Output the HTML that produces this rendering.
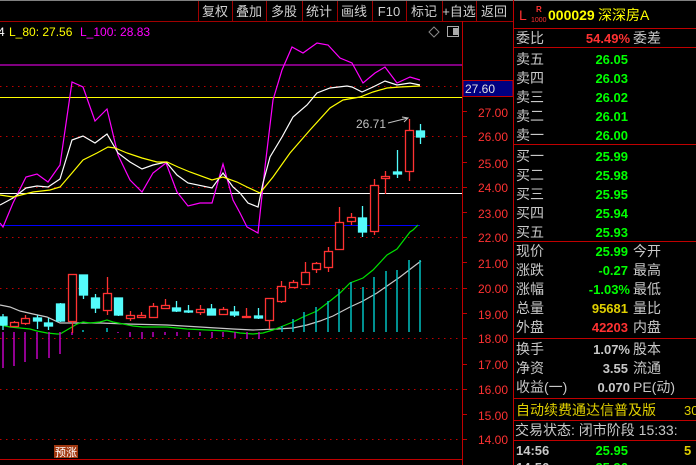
<!DOCTYPE html>
<html><head><meta charset="utf-8"><style>
html,body{margin:0;padding:0;background:#000;}
body{width:696px;height:465px;overflow:hidden;position:relative;font-family:"Liberation Sans","Noto Sans CJK SC",sans-serif;}
svg{position:absolute;left:0;top:0;}
</style></head><body>
<svg width="696" height="465" viewBox="0 0 696 465" font-family="Liberation Sans, Noto Sans CJK SC, sans-serif">
<rect width="696" height="465" fill="#000"/>
<line x1="0" y1="0.5" x2="696" y2="0.5" stroke="#808080"/>
<g stroke="#a00000" stroke-width="1">
<line x1="0" y1="21.5" x2="513" y2="21.5"/>
<line x1="198.5" y1="1" x2="198.5" y2="21"/><line x1="232.5" y1="1" x2="232.5" y2="21"/><line x1="266.5" y1="1" x2="266.5" y2="21"/><line x1="302.5" y1="1" x2="302.5" y2="21"/><line x1="337.5" y1="1" x2="337.5" y2="21"/><line x1="372.5" y1="1" x2="372.5" y2="21"/><line x1="406.5" y1="1" x2="406.5" y2="21"/><line x1="442.5" y1="1" x2="442.5" y2="21"/><line x1="476.5" y1="1" x2="476.5" y2="21"/>
</g>
<g fill="#d0d0d0" font-size="13" text-anchor="middle">
<text x="215" y="16">复权</text><text x="249" y="16">叠加</text><text x="284" y="16">多股</text><text x="319" y="16">统计</text><text x="354" y="16">画线</text><text x="389" y="16">F10</text><text x="424" y="16">标记</text><text x="459" y="16">+自选</text><text x="494" y="16">返回</text>
</g>
<text x="-2" y="36" font-size="12" fill="#fff">4</text>
<text x="9" y="36" font-size="12" fill="#ffff00">L_80: 27.56</text>
<text x="80" y="36" font-size="12" fill="#ff00ff">L_100: 28.83</text>
<path d="M434 27 l5 5 l-5 5 l-5 -5z" fill="none" stroke="#888"/>
<rect x="447.5" y="26.5" width="11" height="10" fill="none" stroke="#aaa"/><rect x="453" y="28" width="5" height="7" fill="#aaa"/>
<line x1="462.5" y1="21" x2="462.5" y2="465" stroke="#c00000"/>
<line x1="0" y1="459.5" x2="462" y2="459.5" stroke="#c00000"/>
<g stroke="#c00000" stroke-dasharray="1.5,4.5">
<line x1="0" y1="86.5" x2="462" y2="86.5"/><line x1="0" y1="136.5" x2="462" y2="136.5"/><line x1="0" y1="187.5" x2="462" y2="187.5"/><line x1="0" y1="237.5" x2="462" y2="237.5"/><line x1="0" y1="288.5" x2="462" y2="288.5"/><line x1="0" y1="338.5" x2="462" y2="338.5"/><line x1="0" y1="389.5" x2="462" y2="389.5"/><line x1="0" y1="439.5" x2="462" y2="439.5"/>
</g>
<g stroke="#c00000">
<line x1="463" y1="111.5" x2="467" y2="111.5"/><line x1="463" y1="136.5" x2="467" y2="136.5"/><line x1="463" y1="162.5" x2="467" y2="162.5"/><line x1="463" y1="187.5" x2="467" y2="187.5"/><line x1="463" y1="212.5" x2="467" y2="212.5"/><line x1="463" y1="237.5" x2="467" y2="237.5"/><line x1="463" y1="262.5" x2="467" y2="262.5"/><line x1="463" y1="288.5" x2="467" y2="288.5"/><line x1="463" y1="313.5" x2="467" y2="313.5"/><line x1="463" y1="338.5" x2="467" y2="338.5"/><line x1="463" y1="364.5" x2="467" y2="364.5"/><line x1="463" y1="389.5" x2="467" y2="389.5"/><line x1="463" y1="414.5" x2="467" y2="414.5"/><line x1="463" y1="439.5" x2="467" y2="439.5"/>
</g>
<g fill="#ff3232" font-size="12" text-anchor="end">
<text x="508" y="117">27.00</text><text x="508" y="141">26.00</text><text x="508" y="168">25.00</text><text x="508" y="192">24.00</text><text x="508" y="218">23.00</text><text x="508" y="242">22.00</text><text x="508" y="268">21.00</text><text x="508" y="293">20.00</text><text x="508" y="319">19.00</text><text x="508" y="343">18.00</text><text x="508" y="369">17.00</text><text x="508" y="394">16.00</text><text x="508" y="420">15.00</text><text x="508" y="444">14.00</text>
</g>
<rect x="463" y="80.5" width="50" height="16" fill="#000080" stroke="#c00000"/>
<text x="465" y="93" font-size="12" fill="#e0e0e0">27.60</text>
<line x1="0" y1="65" x2="462" y2="65" stroke="#ff00ff"/>
<line x1="0" y1="97.5" x2="462" y2="97.5" stroke="#ffff00"/>
<line x1="0" y1="193.5" x2="462" y2="193.5" stroke="#fff"/>
<line x1="0" y1="225.5" x2="420" y2="225.5" stroke="#0000ff"/>
<polyline fill="none" stroke="#ff00ff" stroke-width="1.2" points="0,223 3,227 13,203 26,177 37,174 48,182 60,165 72,82 83,87 95,121 107,109 118,155 130,180 142,192 153,173 166,163 177,192 188,206 200,203 212,203 223,164 233,200 240,213 247,227 258,233 265,167 273,100 282,70 292,47 303,53 317,43 328,45 340,58 352,63 363,83 375,73 385,67 397,83 410,77 420,80"/>
<polyline fill="none" stroke="#fff" stroke-width="1.2" points="0,205 13,198 26,188 37,186 48,187 60,179 72,140 83,136 95,143 107,134 118,153 130,162 142,169 153,165 166,162 177,175 188,183 212,188 223,173 233,187 240,193 248,203 258,207 263,183 270,157 282,137 293,117 307,105 317,93 330,88 347,86 352,87 362,92 373,87 385,81 397,85 410,83 420,85"/>
<polyline fill="none" stroke="#ffff00" stroke-width="1.2" points="0,195 13,197 33,192 50,190 60,187 72,173 83,160 97,153 108,147 115,148 127,153 142,158 157,162 167,162 178,167 190,172 212,180 223,177 237,182 247,187 260,193 273,177 290,153 310,130 330,108 343,100 360,97 373,92 387,88 400,87 420,86"/>
<text x="356" y="128" font-size="12" fill="#c0c0c0">26.71</text>
<path d="M388 123 L408 118 M402 117 L408 118 L404 122" fill="none" stroke="#c0c0c0"/>
<polyline fill="none" stroke="#c8c8c8" stroke-width="1.2" points="0,305 10,307 20,311 33,314 47,317 60,323 100,323 127,324 167,325 200,327 233,329 253,330 277,329 293,328 307,325 320,321 333,316 350,307 363,301 377,293 387,286 400,277 413,267 421,261"/>
<polyline fill="none" stroke="#00e000" stroke-width="1.2" points="0,325 10,327 20,328 30,329 37,331 47,333 57,334 60,334 72,327 77,324 83,322 90,323 100,322 107,320 113,322 123,324 133,326 143,327 167,327 187,329 207,330 227,331 240,333 253,334 263,333 273,330 283,326 293,322 303,317 317,311 330,301 340,293 350,283 363,278 373,270 387,255 397,249 410,232 413,230 418,225"/>
<g stroke="#c000c0" stroke-width="1.5">
<line x1="3" y1="332" x2="3" y2="368"/><line x1="14" y1="332" x2="14" y2="366"/><line x1="25" y1="332" x2="25" y2="362"/><line x1="37" y1="332" x2="37" y2="359"/><line x1="49" y1="332" x2="49" y2="358"/><line x1="60" y1="332" x2="60" y2="354"/><line x1="72" y1="332" x2="72" y2="335"/><line x1="118" y1="332" x2="118" y2="333"/><line x1="130" y1="332" x2="130" y2="337"/><line x1="142" y1="332" x2="142" y2="339"/><line x1="153" y1="332" x2="153" y2="337"/><line x1="165" y1="332" x2="165" y2="335"/><line x1="177" y1="332" x2="177" y2="336"/><line x1="189" y1="332" x2="189" y2="337"/><line x1="200" y1="332" x2="200" y2="336"/><line x1="212" y1="332" x2="212" y2="338"/><line x1="223" y1="332" x2="223" y2="337"/><line x1="235" y1="332" x2="235" y2="338"/><line x1="247" y1="332" x2="247" y2="339"/><line x1="259" y1="332" x2="259" y2="339"/>
</g>
<g stroke="#00c0c0" stroke-width="1.5">
<line x1="83" y1="330" x2="83" y2="332"/><line x1="107" y1="328" x2="107" y2="332"/><line x1="282" y1="326" x2="282" y2="332"/><line x1="293" y1="319" x2="293" y2="332"/><line x1="304" y1="312" x2="304" y2="332"/><line x1="316" y1="307" x2="316" y2="332"/><line x1="328" y1="301" x2="328" y2="332"/><line x1="339" y1="289" x2="339" y2="332"/><line x1="351" y1="282" x2="351" y2="332"/><line x1="363" y1="287" x2="363" y2="332"/><line x1="374" y1="277" x2="374" y2="332"/><line x1="386" y1="271" x2="386" y2="332"/><line x1="397" y1="270" x2="397" y2="332"/><line x1="409" y1="260" x2="409" y2="332"/><line x1="420" y1="260" x2="420" y2="332"/>
</g>
<g stroke="#ff3232" fill="#000" stroke-width="1.3">
<line x1="14.5" y1="321" x2="14.5" y2="327"/><rect x="10.5" y="322.5" width="8" height="4"/>
<line x1="25.5" y1="315" x2="25.5" y2="325"/><rect x="21.5" y="318.5" width="8" height="5"/>
<line x1="72.5" y1="274" x2="72.5" y2="333"/><rect x="68.5" y="274.5" width="8" height="47"/>
<line x1="107.5" y1="277" x2="107.5" y2="315"/><rect x="103.5" y="293.5" width="8" height="17"/>
<line x1="130.5" y1="311" x2="130.5" y2="321"/><rect x="126.5" y="315.5" width="8" height="3"/>
<line x1="141.5" y1="312" x2="141.5" y2="317"/><rect x="137.5" y="315.5" width="8" height="2"/>
<line x1="153.5" y1="303" x2="153.5" y2="317"/><rect x="149.5" y="306.5" width="8" height="11"/>
<line x1="165.5" y1="299" x2="165.5" y2="309"/><rect x="161.5" y="305.5" width="8" height="3"/>
<line x1="200.5" y1="305" x2="200.5" y2="315"/><rect x="196.5" y="309.5" width="8" height="3"/>
<line x1="223.5" y1="307" x2="223.5" y2="315"/><rect x="219.5" y="309.5" width="8" height="5"/>
<line x1="246.5" y1="308" x2="246.5" y2="318"/><rect x="242.5" y="316.5" width="8" height="1"/>
<line x1="269.5" y1="298" x2="269.5" y2="329"/><rect x="265.5" y="298.5" width="8" height="22"/>
<line x1="281.5" y1="281" x2="281.5" y2="303"/><rect x="277.5" y="286.5" width="8" height="15"/>
<line x1="293.5" y1="280" x2="293.5" y2="288"/><rect x="289.5" y="282.5" width="8" height="5"/>
<line x1="305.5" y1="262" x2="305.5" y2="285"/><rect x="301.5" y="272.5" width="8" height="12"/>
<line x1="316.5" y1="262" x2="316.5" y2="273"/><rect x="312.5" y="263.5" width="8" height="6"/>
<line x1="328.5" y1="247" x2="328.5" y2="272"/><rect x="324.5" y="251.5" width="8" height="16"/>
<line x1="339.5" y1="207" x2="339.5" y2="249"/><rect x="335.5" y="222.5" width="8" height="27"/>
<line x1="351.5" y1="213" x2="351.5" y2="225"/><rect x="347.5" y="217.5" width="8" height="4"/>
<line x1="374.5" y1="179" x2="374.5" y2="235"/><rect x="370.5" y="185.5" width="8" height="46"/>
<line x1="385.5" y1="171" x2="385.5" y2="194"/><rect x="381.5" y="176.5" width="8" height="2"/>
<line x1="409.5" y1="119" x2="409.5" y2="181"/><rect x="405.5" y="130.5" width="8" height="41"/>
</g>
<g stroke="#54fcfc" fill="#54fcfc" stroke-width="1.3">
<line x1="3" y1="314" x2="3" y2="330"/><rect x="-1" y="317" width="8" height="8"/>
<line x1="37.5" y1="315" x2="37.5" y2="329"/><rect x="33.5" y="318" width="8" height="3"/>
<line x1="48.5" y1="318" x2="48.5" y2="330"/><rect x="44.5" y="323" width="8" height="3"/>
<line x1="60.5" y1="303" x2="60.5" y2="322"/><rect x="56.5" y="304" width="8" height="17"/>
<line x1="83.5" y1="275" x2="83.5" y2="299"/><rect x="79.5" y="275" width="8" height="20"/>
<line x1="95.5" y1="294" x2="95.5" y2="313"/><rect x="91.5" y="298" width="8" height="10"/>
<line x1="118.5" y1="298" x2="118.5" y2="316"/><rect x="114.5" y="298" width="8" height="17"/>
<line x1="176.5" y1="301" x2="176.5" y2="312"/><rect x="172.5" y="308" width="8" height="3"/>
<line x1="188.5" y1="305" x2="188.5" y2="313"/><rect x="184.5" y="311" width="8" height="1"/>
<line x1="211.5" y1="304" x2="211.5" y2="315"/><rect x="207.5" y="309" width="8" height="6"/>
<line x1="234.5" y1="306" x2="234.5" y2="317"/><rect x="230.5" y="312" width="8" height="3"/>
<line x1="258.5" y1="308" x2="258.5" y2="319"/><rect x="254.5" y="316" width="8" height="2"/>
<line x1="362.5" y1="206" x2="362.5" y2="237"/><rect x="358.5" y="218" width="8" height="14"/>
<line x1="397.5" y1="150" x2="397.5" y2="178"/><rect x="393.5" y="172" width="8" height="2"/>
<line x1="420.5" y1="124" x2="420.5" y2="144"/><rect x="416.5" y="131" width="8" height="6"/>
</g>
<rect x="54" y="445" width="24" height="13" fill="#a03810"/>
<text x="55" y="456" font-size="11" fill="#fff">预涨</text>
<line x1="513.5" y1="0" x2="513.5" y2="465" stroke="#c00000"/>
<g stroke="#c00000">
<line x1="513" y1="28.5" x2="696" y2="28.5"/><line x1="513" y1="47.5" x2="696" y2="47.5"/><line x1="513" y1="144.5" x2="696" y2="144.5"/><line x1="513" y1="241.5" x2="696" y2="241.5"/><line x1="513" y1="338.5" x2="696" y2="338.5"/><line x1="513" y1="398.5" x2="696" y2="398.5"/><line x1="513" y1="420.5" x2="696" y2="420.5"/><line x1="513" y1="440.5" x2="696" y2="440.5"/>
</g>
<text x="519" y="20" font-size="14" fill="#ff3232">L</text>
<text x="536" y="12" font-size="8" fill="#ff3232" font-weight="bold">R</text>
<text x="531" y="22" font-size="7" fill="#ff3232">1000</text>
<text x="548" y="20" font-size="14" fill="#ffff00" font-weight="bold">000029</text>
<text x="598" y="20" font-size="14" fill="#ffff00">深深房A</text>
<g font-size="14" fill="#c8c8c8">
<text x="516" y="43">委比</text>
<text x="516" y="64">卖五</text><text x="516" y="83">卖四</text><text x="516" y="102">卖三</text><text x="516" y="121">卖二</text><text x="516" y="140">卖一</text>
<text x="516" y="161">买一</text><text x="516" y="180">买二</text><text x="516" y="199">买三</text><text x="516" y="218">买四</text><text x="516" y="237">买五</text>
<text x="516" y="256">现价</text><text x="516" y="275">涨跌</text><text x="516" y="294">涨幅</text><text x="516" y="313">总量</text><text x="516" y="332">外盘</text>
<text x="516" y="354">换手</text><text x="516" y="373">净资</text><text x="516" y="392">收益(一)</text>
<text x="633" y="43">委差</text>
<text x="633" y="256">今开</text><text x="633" y="275">最高</text><text x="633" y="294">最低</text><text x="633" y="313">量比</text><text x="633" y="332">内盘</text>
<text x="633" y="354">股本</text><text x="633" y="373">流通</text><text x="633" y="392">PE(动)</text>
<text x="515" y="435">交易状态: 闭市阶段 15:33:</text>
</g>
<g font-size="13" font-weight="bold" text-anchor="end">
<text x="630" y="43" fill="#ff3232">54.49%</text>
<text x="628" y="64" fill="#00ff00">26.05</text><text x="628" y="83" fill="#00ff00">26.03</text><text x="628" y="102" fill="#00ff00">26.02</text><text x="628" y="121" fill="#00ff00">26.01</text><text x="628" y="140" fill="#00ff00">26.00</text>
<text x="628" y="161" fill="#00ff00">25.99</text><text x="628" y="180" fill="#00ff00">25.98</text><text x="628" y="199" fill="#00ff00">25.95</text><text x="628" y="218" fill="#00ff00">25.94</text><text x="628" y="237" fill="#00ff00">25.93</text>
<text x="628" y="256" fill="#00ff00">25.99</text><text x="628" y="275" fill="#00ff00">-0.27</text><text x="630" y="294" fill="#00ff00">-1.03%</text><text x="628" y="313" fill="#e0d000">95681</text><text x="628" y="332" fill="#ff3232">42203</text>
<text x="630" y="354" fill="#c8c8c8">1.07%</text><text x="628" y="373" fill="#c8c8c8">3.55</text><text x="630" y="392" fill="#c8c8c8">0.070</text>
</g>
<text x="516" y="415" font-size="14" fill="#e0d000">自动续费通达信普及版</text>
<text x="684" y="415" font-size="13" fill="#e0d000">30</text>
<text x="516" y="455" font-size="13" font-weight="bold" fill="#c8c8c8">14:56</text>
<text x="628" y="455" font-size="13" font-weight="bold" fill="#00ff00" text-anchor="end">25.95</text>
<text x="684" y="455" font-size="13" font-weight="bold" fill="#e0d000">5</text>
<text x="516" y="472" font-size="13" font-weight="bold" fill="#c8c8c8">14:56</text>
<text x="628" y="472" font-size="13" font-weight="bold" fill="#00ff00" text-anchor="end">25.96</text>
</svg>
</body></html>
